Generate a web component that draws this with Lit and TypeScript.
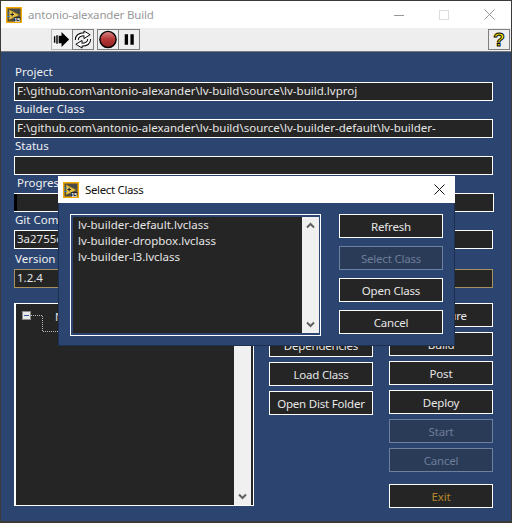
import { LitElement, css, html, svg } from "lit";
import { customElement } from "lit/decorators.js";

const lvIcon = html`
  <svg class="lv-icon" width="16" height="16" viewBox="0 0 16 16">
    <rect x="0.750" y="0.750" width="14.500" height="14.500" fill="#4a4a48" stroke="#f2a900" stroke-width="1.500" />
    <path d="M3 2.500 L13.500 8 L3 13 Z" fill="#e6c24a" stroke="#7a6412" stroke-width="0.600" />
    <path d="M1 6 H4 M1 9.500 H4" stroke="#3f7fd0" stroke-width="1.200" />
    <path d="M4.500 7.500 H8 M6.200 5.700 V9.300" stroke="#222" stroke-width="1" />
    <rect x="8" y="10" width="6.500" height="4.500" fill="#2b2b2b" />
    <text x="8.300" y="14.500" font-size="5.500" font-weight="700" font-family="Liberation Sans" fill="#fff">15</text>
  </svg>
`;

const runIcon = svg`
  <path d="M2 7h1.500v7H2zM4.500 6H6v9H4.500z" fill="#000" />
  <path d="M7 6.500h3V2.500l8 8-8 8v-4H7z" fill="#000" />
`;

const retainArrow = svg`
  <path d="M4 11 C4 7 7 5 12 5" fill="none" stroke="#000" stroke-width="4" />
  <path d="M11.500 1.500 L18 5.500 L11.500 9.500 Z" fill="#fff" stroke="#000" stroke-width="1" stroke-linejoin="round" />
  <path d="M4 11 C4 7 7 5 12.500 5" fill="none" stroke="#fff" stroke-width="2" />
`;

const retainIcon = svg`
  ${retainArrow}
  <g transform="rotate(180 10.500 10.500)">${retainArrow}</g>
`;

const stopIcon = svg`
  <defs>
    <linearGradient id="red" x1="0" y1="0" x2="0" y2="1">
      <stop offset="0" stop-color="#d98a8a" />
      <stop offset="0.45" stop-color="#b93a3a" />
      <stop offset="1" stop-color="#8e1f1f" />
    </linearGradient>
  </defs>
  <circle cx="10.500" cy="10.500" r="8.500" fill="url(#red)" stroke="#000" stroke-width="1.500" />
`;

const pauseIcon = svg`<path d="M6 5h3.500v11H6zM12 5h3.500v11H12z" fill="#000" />`;

@customElement("app-root")
export class AppRoot extends LitElement {
  static styles = css`
    :host {
      display: block;
      width: 512px;
      height: 523px;
      overflow: hidden;
      position: relative;
      background: #3b3a36;
      font-family: "Noto Sans", sans-serif;
      font-size: 11.5px;
    }
    .window {
      margin: 1px 0 0 1px;
      width: 510px;
      height: 520px;
      display: flex;
      flex-direction: column;
    }
    .titlebar {
      height: 27px;
      background: #fff;
      display: flex;
      align-items: center;
      padding-left: 5px;
      gap: 6px;
      color: #999;
      flex: none;
    }
    .title-text {
      flex: 1;
      letter-spacing: -0.17px;
    }
    .win-controls {
      display: flex;
      align-items: center;
      margin-right: 16px;
      gap: 35px;
    }
    .toolbar {
      height: 24px;
      flex: none;
      box-sizing: border-box;
      background: #eeeeee;
      border-bottom: 1px solid #777;
      display: flex;
      padding: 1px 1px 0 51px;
    }
    .tool {
      width: 22px;
      height: 21px;
      box-sizing: border-box;
      border: 1px solid #808080;
      display: flex;
      align-items: center;
      justify-content: center;
      margin-left: -1px;
    }
    .tool.pressed {
      border-color: #b8b8b8;
      background: #f3f3f3;
    }
    .tool-sep {
      width: 4px;
    }
    .tool-spacer {
      flex: 1;
    }
    .main {
      flex: 1;
      background: #2c4470;
      padding: 12px 0 0 13px;
      color: #f0f0f0;
    }
    .group {
      height: 37px;
      width: 479px;
    }
    .group.version {
      margin-top: 2px;
    }
    .label {
      height: 18px;
      line-height: 16px;
      padding-left: 1px;
    }
    .label.progress {
      padding-left: 3px;
    }
    .field {
      height: 19px;
      box-sizing: border-box;
      border: 1px solid #fff;
      background: #252525;
      color: #e6e6e6;
      line-height: 16px;
      padding-left: 2px;
      white-space: nowrap;
      overflow: hidden;
    }
    .field.tan {
      border-color: #a8915f;
    }
    .bar {
      display: flex;
      height: 19px;
      width: 480px;
      box-sizing: border-box;
      border: solid #fff;
      border-width: 1px 1px 1px 0;
      background: #252525;
    }
    .bar-fill {
      width: 3px;
      background: #000;
    }
    .lower {
      display: flex;
      margin-top: 15px;
    }
    .tree {
      width: 240px;
      height: 203px;
      box-sizing: border-box;
      border: solid #fff;
      border-width: 1px 1px 1px 2px;
      background: #252525;
      display: flex;
    }
    .tree-body {
      flex: 1;
      padding: 7px 0 0 6px;
      display: flex;
      align-items: flex-start;
    }
    .expander {
      width: 7px;
      height: 7px;
      border: 1px solid #8a8a8a;
      background: #e8e8e8;
      box-sizing: content-box;
      display: flex;
      align-items: center;
      justify-content: center;
      flex: none;
    }
    .expander span {
      width: 5px;
      height: 1px;
      background: #3a5aa8;
    }
    .tree-lines {
      flex: none;
    }
    .tree-item {
      margin: -2px 0 0 -3px;
      color: #e6e6e6;
    }
    .scroll {
      width: 17px;
      background: #f0f0f0;
      display: flex;
      flex-direction: column;
      justify-content: space-between;
      align-items: center;
      padding: 5px 0;
      box-sizing: border-box;
      flex: none;
    }
    .tree .scroll {
      margin-right: 2px;
    }
    .col-left {
      width: 104px;
      margin-left: 15px;
      padding-top: 30px;
      display: flex;
      flex-direction: column;
      gap: 5px;
    }
    .col-right {
      width: 104px;
      margin-left: 16px;
      display: flex;
      flex-direction: column;
      gap: 5px;
    }
    button {
      height: 24px;
      width: 104px;
      box-sizing: border-box;
      border: 1px solid #fff;
      background: #252525;
      color: #e6e6e6;
      font: inherit;
      padding: 0;
      letter-spacing: -0.2px;
      flex: none;
    }
    button.off {
      border-color: #6c80a0;
      background: #2a3b58;
      color: #6c7d98;
    }
    button.exit {
      color: #b5862b;
      margin-top: 7px;
    }
    .dialog {
      position: absolute;
      left: 58px;
      top: 176px;
      width: 397px;
      height: 170px;
      box-sizing: border-box;
      background: #2c4470;
      border: 1px solid #1d3050;
      border-top: 0;
      display: flex;
      flex-direction: column;
    }
    .dialog-title {
      height: 27px;
      background: #fff;
      display: flex;
      align-items: center;
      padding-left: 5px;
      gap: 6px;
      color: #111;
      flex: none;
      margin: 0 -1px;
    }
    .dialog-title .title-text {
      flex: none;
      letter-spacing: -0.35px;
    }
    .dialog-close {
      margin-right: 10px;
      display: flex;
    }
    .dialog-body {
      display: flex;
      padding: 11px 0 0 11px;
      gap: 18px;
    }
    .list {
      width: 251px;
      height: 122px;
      box-sizing: border-box;
      border: 1px solid #fff;
      padding: 2px 1px 2px 2px;
      display: flex;
    }
    .items {
      flex: 1;
      background: #252525;
      color: #e6e6e6;
      padding: 0 0 0 5px;
      line-height: 16px;
    }
    .dialog-btns {
      display: flex;
      flex-direction: column;
      gap: 8px;
    }
  `;

  private chevron(up: boolean) {
    return html`<svg width="9" height="7" viewBox="0 0 9 7">
      <path d=${up ? "M1 5.500 L4.500 2 L8 5.500" : "M1 1.500 L4.500 5 L8 1.500"} fill="none" stroke="#606060" stroke-width="2" />
    </svg>`;
  }

  private scrollbar() {
    return html`<div class="scroll">${this.chevron(true)}${this.chevron(false)}</div>`;
  }

  private field(label: string, value: string) {
    return html`<div class="group">
      <div class="label">${label}</div>
      <div class="field">${value}</div>
    </div>`;
  }

  render() {
    return html`
      <div class="window">
        <div class="titlebar">
          ${lvIcon}
          <span class="title-text">antonio-alexander Build</span>
          <div class="win-controls">
            <svg width="10" height="10" viewBox="0 0 10 10"><path d="M0 5.500H10" stroke="#999" /></svg>
            <svg width="10" height="10" viewBox="0 0 10 10"><rect x="0.500" y="0.500" width="9" height="9" fill="none" stroke="#ddd" /></svg>
            <svg width="11" height="11" viewBox="0 0 11 11"><path d="M0.500 0.500L10.500 10.500M10.500 0.500L0.500 10.500" stroke="#999" /></svg>
          </div>
        </div>

        <div class="toolbar">
          <div class="tool pressed"><svg width="21" height="21" viewBox="0 0 21 21">${runIcon}</svg></div>
          <div class="tool"><svg width="21" height="21" viewBox="0 0 21 21">${retainIcon}</svg></div>
          <div class="tool-sep"></div>
          <div class="tool"><svg width="21" height="21" viewBox="0 0 21 21">${stopIcon}</svg></div>
          <div class="tool"><svg width="21" height="21" viewBox="0 0 21 21">${pauseIcon}</svg></div>
          <div class="tool-spacer"></div>
          <div class="tool">
            <svg width="21" height="21" viewBox="0 0 21 21">
              <text x="10.500" y="17.500" text-anchor="middle" font-size="20" font-weight="700" font-family="Liberation Sans" fill="#f5e800" stroke="#000" stroke-width="1">?</text>
            </svg>
          </div>
        </div>

        <div class="main">
          ${this.field("Project", "F:\\github.com\\antonio-alexander\\lv-build\\source\\lv-build.lvproj")}
          ${this.field("Builder Class", "F:\\github.com\\antonio-alexander\\lv-build\\source\\lv-builder-default\\lv-builder-")}
          ${this.field("Status", "")}
          <div class="group">
            <div class="label progress">Progress</div>
            <div class="bar"><div class="bar-fill"></div></div>
          </div>
          ${this.field("Git Commit", "3a2755c")}
          <div class="group version">
            <div class="label">Version</div>
            <div class="field tan">1.2.4</div>
          </div>

          <div class="lower">
            <div class="tree">
              <div class="tree-body">
                <div class="expander"><span></span></div>
                <svg class="tree-lines" width="27" height="22" viewBox="0 0 27 22">
                  <path d="M0 4.500H11.500V20.500H27" fill="none" stroke="#bbb" stroke-dasharray="1 1" />
                </svg>
                <span class="tree-item">N</span>
              </div>
              ${this.scrollbar()}
            </div>
            <div class="col-left">
              <button>Dependencies</button>
              <button>Load Class</button>
              <button>Open Dist Folder</button>
            </div>
            <div class="col-right">
              <button>Configure</button>
              <button>Build</button>
              <button>Post</button>
              <button>Deploy</button>
              <button class="off">Start</button>
              <button class="off">Cancel</button>
              <button class="exit">Exit</button>
            </div>
          </div>
        </div>
      </div>

      <div class="dialog">
        <div class="dialog-title">
          ${lvIcon}
          <span class="title-text">Select Class</span>
          <span class="tool-spacer"></span>
          <svg class="dialog-close" width="11" height="11" viewBox="0 0 11 11"><path d="M0.500 0.500L10.500 10.500M10.500 0.500L0.500 10.500" stroke="#111" /></svg>
        </div>
        <div class="dialog-body">
          <div class="list">
            <div class="items">
              <div>lv-builder-default.lvclass</div>
              <div>lv-builder-dropbox.lvclass</div>
              <div>lv-builder-l3.lvclass</div>
            </div>
            ${this.scrollbar()}
          </div>
          <div class="dialog-btns">
            <button>Refresh</button>
            <button class="off">Select Class</button>
            <button>Open Class</button>
            <button>Cancel</button>
          </div>
        </div>
      </div>
    `;
  }
}
